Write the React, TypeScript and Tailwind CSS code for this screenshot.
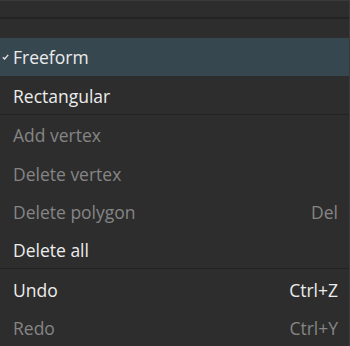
import React from 'react';

type Item = { label: string; shortcut?: string; disabled?: boolean; checked?: boolean; sepAfter?: boolean };

const items: Item[] = [
  { label: 'Freeform', checked: true },
  { label: 'Rectangular', sepAfter: true },
  { label: 'Add vertex', disabled: true },
  { label: 'Delete vertex', disabled: true },
  { label: 'Delete polygon', shortcut: 'Del', disabled: true },
  { label: 'Delete all', sepAfter: true },
  { label: 'Undo', shortcut: 'Ctrl+Z' },
  { label: 'Redo', shortcut: 'Ctrl+Y', disabled: true },
];

const Check = () => (
  <svg width="7" height="6" viewBox="0 0 7 6" className="absolute left-[2px] top-1/2 -translate-y-1/2">
    <path d="M0.8 3.2 L2.6 5 L6.2 0.8" fill="none" stroke="#e6e6e6" strokeWidth="1.3" />
  </svg>
);

export default function App() {
  return (
    <div
      className="w-[350px] h-[346px] overflow-hidden bg-[#2d2d2d] border-t border-r border-[#3a3a3a] text-[17.5px]"
      style={{ fontFamily: '"Open Sans", "Noto Sans", sans-serif' }}
    >
      <div className="h-[16px]" />
      <div className="h-[2px] bg-[#232323]" />
      <div className="h-[19px]" />
      {items.map((it) => (
        <React.Fragment key={it.label}>
          <div
            className={`relative flex items-center justify-between pl-[13px] pr-[11px] ${
              it.checked ? 'bg-[#37474f] h-[38px]' : 'h-[38.3px] pt-[2px]'
            } ${it.disabled ? 'text-[#858585]' : 'text-[#ececec]'}`}
          >
            {it.checked && <Check />}
            <span>{it.label}</span>
            {it.shortcut && <span>{it.shortcut}</span>}
          </div>
          {it.sepAfter && <div className="h-px bg-[#232323]" />}
        </React.Fragment>
      ))}
    </div>
  );
}
